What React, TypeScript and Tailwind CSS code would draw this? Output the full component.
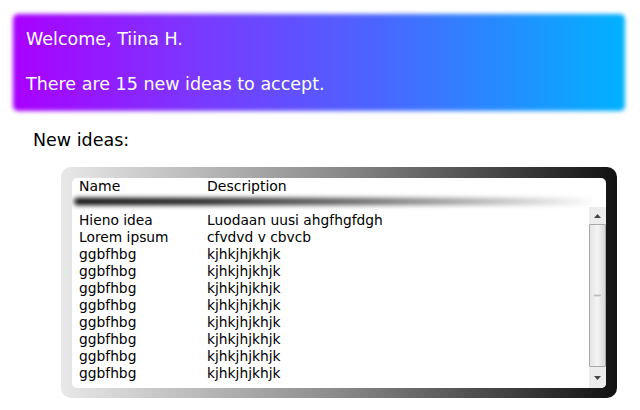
import React from 'react';

const rows: [string, string][] = [
  ['Hieno idea', 'Luodaan uusi ahgfhgfdgh'],
  ['Lorem ipsum', 'cfvdvd v cbvcb'],
  ['ggbfhbg', 'kjhkjhjkhjk'],
  ['ggbfhbg', 'kjhkjhjkhjk'],
  ['ggbfhbg', 'kjhkjhjkhjk'],
  ['ggbfhbg', 'kjhkjhjkhjk'],
  ['ggbfhbg', 'kjhkjhjkhjk'],
  ['ggbfhbg', 'kjhkjhjkhjk'],
  ['ggbfhbg', 'kjhkjhjkhjk'],
  ['ggbfhbg', 'kjhkjhjkhjk'],
];

const App: React.FC = () => {
  return (
    <div className="w-[640px] h-[410px] bg-white font-['DejaVu_Sans',sans-serif] text-black pt-[14px] pl-[13px] overflow-hidden">
      {/* Welcome banner */}
      <div className="relative w-[612px] h-[97px]">
        <div className="absolute inset-0 rounded-[5px] bg-[linear-gradient(90deg,#aa00ff_0%,#7a38ff_30%,#4a66ff_60%,#00b2ff_100%)] blur-[2px]" />
        <div className="relative pl-[13px] pt-[15px] text-white text-[17.5px] leading-[20px]">
          <p>Welcome, Tiina H.</p>
          <p className="mt-[25px]">There are 15 new ideas to accept.</p>
        </div>
      </div>

      <p className="ml-[20px] mt-[19px] text-[17.5px] leading-[20px]">New ideas:</p>

      {/* Ideas table */}
      <div className="ml-[48px] mt-[17px] w-[556px] h-[231px] rounded-[10px] bg-[linear-gradient(90deg,#e8e8e8_0%,#8a8a8a_50%,#111_100%)] pt-[11px] pl-[11px] pr-[11px] pb-[10px]">
        <div className="h-full bg-white rounded-[5px] flex flex-col overflow-hidden text-[14px] leading-[17px]">
          <div className="relative h-[29px] shrink-0">
            <div className="flex pl-[7px]">
              <span className="w-[128px]">Name</span>
              <span>Description</span>
            </div>
            <div className="absolute left-[2px] right-[8px] top-[20px] h-[7px] rounded-full bg-[linear-gradient(90deg,#000_0%,#1a1a1a_25%,#666_55%,#ccc_85%,transparent_100%)] blur-[2.5px]" />
          </div>
          <div className="flex flex-1 min-h-0">
            <div className="flex-1 pl-[7px] pt-[5px] text-[13.8px]">
              {rows.map(([name, desc], i) => (
                <div key={i} className="flex">
                  <span className="w-[128px]">{name}</span>
                  <span>{desc}</span>
                </div>
              ))}
            </div>
            {/* Scrollbar */}
            <div className="w-[17px] flex flex-col bg-[#f0f0f0]">
              <div className="h-[17px] flex items-center justify-center bg-[#ececec]">
                <svg width="7" height="4" viewBox="0 0 7 4"><path d="M3.5 0L7 4H0z" fill="#444" /></svg>
              </div>
              <div className="flex-1 border border-[#a8a8a8] rounded-[1px] bg-[linear-gradient(90deg,#e4e4e4,#f4f4f4_50%,#d8d8d8)] flex items-center justify-center">
                <div className="w-[7px] h-[3px] bg-[#bbb] border-y border-[#ddd]" />
              </div>
              <div className="h-[21px] flex items-center justify-center bg-[#ececec]">
                <svg width="7" height="4" viewBox="0 0 7 4"><path d="M0 0H7L3.5 4z" fill="#444" /></svg>
              </div>
            </div>
          </div>
        </div>
      </div>
    </div>
  );
};

export default App;
